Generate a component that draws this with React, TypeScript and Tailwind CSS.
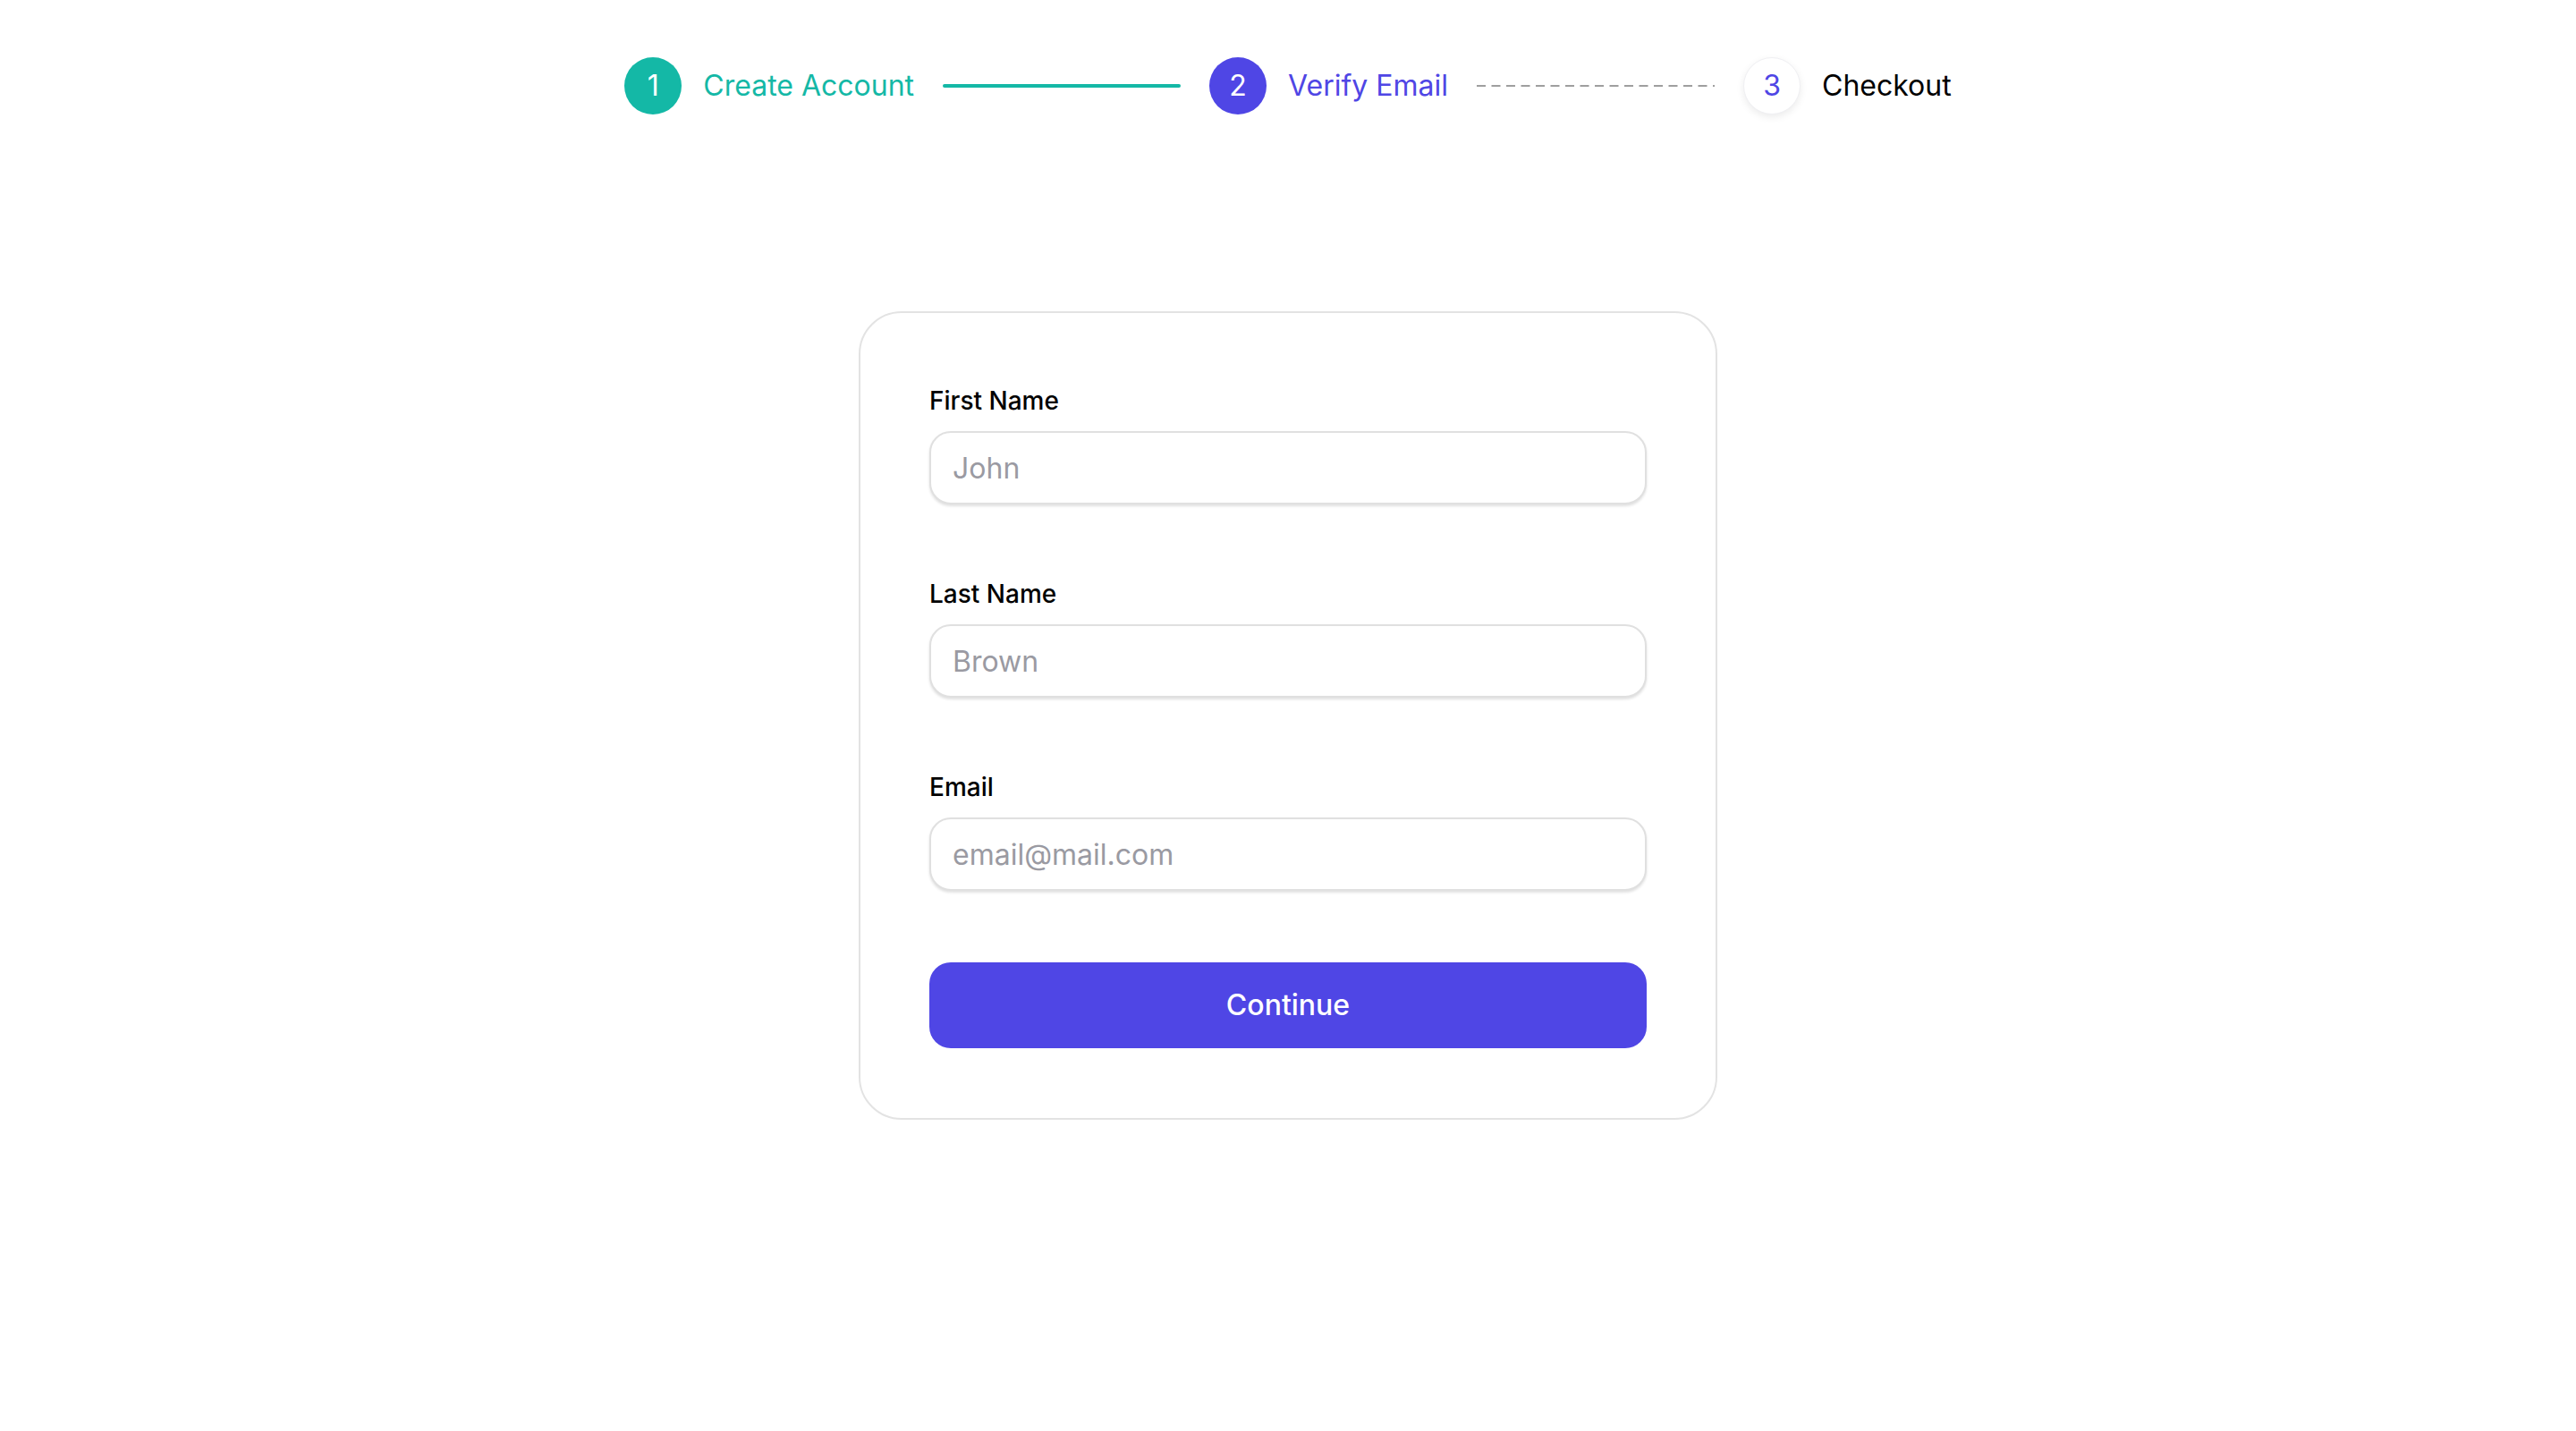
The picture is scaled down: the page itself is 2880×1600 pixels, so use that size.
const steps = [
  { n: 1, label: "Create Account", state: "done" },
  { n: 2, label: "Verify Email", state: "current" },
  { n: 3, label: "Checkout", state: "todo" },
];

function StepDot({ n, state }: { n: number; state: string }) {
  if (state === "done")
    return (
      <div className="flex h-16 w-16 items-center justify-center rounded-full bg-[#14b8a6] text-[32px] text-white">
        {n}
      </div>
    );
  if (state === "current")
    return (
      <div className="flex h-16 w-16 items-center justify-center rounded-full bg-[#4f46e5] text-[32px] text-white">
        {n}
      </div>
    );
  return (
    <div className="flex h-16 w-16 items-center justify-center rounded-full border border-[#f0f0f3] bg-white text-[32px] text-[#4f46e5] shadow-[0_3px_8px_rgba(0,0,0,0.08)]">
      {n}
    </div>
  );
}

function Field({ label, placeholder }: { label: string; placeholder: string }) {
  return (
    <div className="flex flex-col">
      <label className="text-[28px] leading-[40px] font-medium text-black">{label}</label>
      <input
        type="text"
        placeholder={placeholder}
        className="mt-[14px] h-[82px] w-full rounded-[24px] border-2 border-[#e0e0e0] bg-white px-[24px] text-[32px] text-black shadow-[0_2px_3px_rgba(0,0,0,0.12)] outline-none placeholder:text-[#9a9aa2]"
      />
    </div>
  );
}

export default function App() {
  return (
    <div className="min-h-screen bg-white pt-16 pb-20 font-['Inter',_'Liberation_Sans',_sans-serif]">
      <nav className="flex items-center justify-center">
        {steps.map((s, i) => (
          <div key={s.n} className="flex items-center">
            <StepDot n={s.n} state={s.state} />
            <span
              className={
                "ml-6 text-[32px] leading-[40px] " +
                (s.state === "done"
                  ? "text-[#14b8a6]"
                  : s.state === "current"
                  ? "text-[#4f46e5]"
                  : "text-black")
              }
            >
              {s.label}
            </span>
            {i === 0 && <div className="mx-8 h-1 w-[266px] rounded-full bg-[#14b8a6]" />}
            {i === 1 && (
              <svg className="mx-8" width="266" height="4" viewBox="0 0 266 4">
                <line
                  x1="0"
                  y1="2"
                  x2="266"
                  y2="2"
                  stroke="#9e9e9e"
                  strokeWidth="2"
                  strokeDasharray="10 6.5"
                />
              </svg>
            )}
          </div>
        ))}
      </nav>

      <section className="mx-auto mt-[220px] flex w-[960px] flex-col gap-20 rounded-[48px] border-2 border-[#e3e3e3] bg-white px-[77px] pt-[78px] pb-[78px]">
        <Field label="First Name" placeholder="John" />
        <Field label="Last Name" placeholder="Brown" />
        <Field label="Email" placeholder="email@mail.com" />
        <button className="h-24 w-full rounded-[24px] bg-[#4f46e5] text-[32px] font-medium text-white">
          Continue
        </button>
      </section>
    </div>
  );
}
